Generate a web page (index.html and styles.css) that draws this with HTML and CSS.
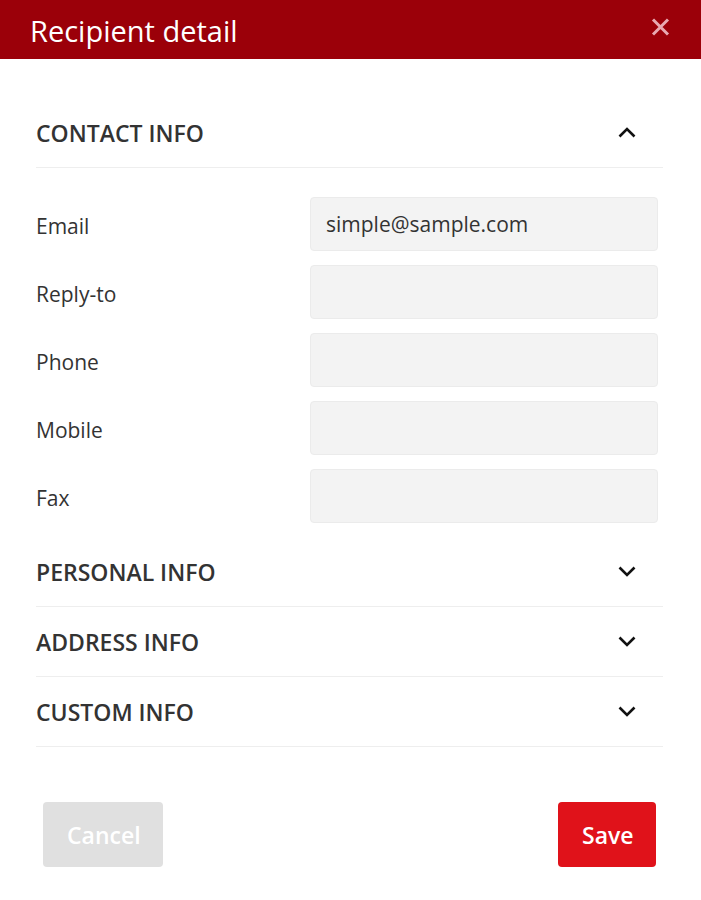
FILE: index.html
```html
<!DOCTYPE html>
<html>
<head>
<meta charset="utf-8">
<title>Recipient detail</title>
<link rel="stylesheet" href="styles.css">
</head>
<body>
<div class="dialog">
  <div class="header">
    <div class="title">Recipient detail</div>
    <svg class="close" width="19" height="18" viewBox="0 0 19 18"><path d="M2 1.5 L17 16.5 M17 1.5 L2 16.5" stroke="#e8a9b2" stroke-width="3" fill="none"/></svg>
  </div>
  <div class="content">
    <div class="section">
      <div class="section-head">
        <span class="section-title">CONTACT INFO</span>
        <svg class="chev" width="18" height="11" viewBox="0 0 18 11"><path d="M1.5 9.5 L9 2 L16.5 9.5" stroke="#111" stroke-width="2.6" fill="none"/></svg>
      </div>
      <div class="fields">
        <div class="field"><label class="label">Email</label><div class="input">simple@sample.com</div></div>
        <div class="field"><label class="label">Reply-to</label><div class="input"></div></div>
        <div class="field"><label class="label">Phone</label><div class="input"></div></div>
        <div class="field"><label class="label">Mobile</label><div class="input"></div></div>
        <div class="field"><label class="label">Fax</label><div class="input"></div></div>
      </div>
    </div>
    <div class="section">
      <div class="section-head">
        <span class="section-title">PERSONAL INFO</span>
        <svg class="chev" width="18" height="11" viewBox="0 0 18 11"><path d="M1.5 1.5 L9 9 L16.5 1.5" stroke="#111" stroke-width="2.6" fill="none"/></svg>
      </div>
    </div>
    <div class="section">
      <div class="section-head">
        <span class="section-title">ADDRESS INFO</span>
        <svg class="chev" width="18" height="11" viewBox="0 0 18 11"><path d="M1.5 1.5 L9 9 L16.5 1.5" stroke="#111" stroke-width="2.6" fill="none"/></svg>
      </div>
    </div>
    <div class="section">
      <div class="section-head">
        <span class="section-title">CUSTOM INFO</span>
        <svg class="chev" width="18" height="11" viewBox="0 0 18 11"><path d="M1.5 1.5 L9 9 L16.5 1.5" stroke="#111" stroke-width="2.6" fill="none"/></svg>
      </div>
    </div>
    <div class="footer">
      <button class="btn btn-cancel">Cancel</button>
      <button class="btn btn-save">Save</button>
    </div>
  </div>
</div>
</body>
</html>
```

FILE: styles.css
```css
html, body {
  margin: 0;
  padding: 0;
  background: #ffffff;
}
body {
  font-family: "Open Sans", "Noto Sans", sans-serif;
  color: #333333;
}
.header {
  height: 57px;
  padding: 2px 31px 0 30px;
  background: #9b0009;
  display: flex;
  align-items: center;
  justify-content: space-between;
}
.title {
  font-size: 29px;
  line-height: 57px;
  color: #ffffff;
  font-weight: 400;
}
.close {
  display: block;
  margin-top: -7px;
}
.content {
  padding: 39px 38px 0 36px;
}
.section-head {
  height: 69px;
  border-bottom: 1px solid #eeeeee;
  display: flex;
  align-items: center;
  justify-content: space-between;
  padding-right: 27px;
}
.section-title {
  font-size: 23px;
  font-weight: 600;
  color: #333333;
  line-height: 30px;
}
.chev {
  display: block;
}
.fields {
  padding-top: 29px;
}
.field {
  display: flex;
  align-items: center;
  margin-bottom: 14px;
  margin-right: 5px;
}
.label {
  width: 274px;
  flex: none;
  font-size: 21px;
  line-height: 28px;
  padding-top: 3px;
  color: #333333;
}
.input {
  flex: 1;
  height: 52px;
  box-sizing: content-box;
  border: 1px solid #ebebeb;
  border-radius: 4px;
  background: #f3f3f3;
  padding: 0 15px;
  font-size: 21px;
  line-height: 52px;
  color: #333333;
}
.footer {
  display: flex;
  justify-content: space-between;
  padding: 55px 7px 0 7px;
}
.btn {
  height: 65px;
  padding: 0 24px;
  border: none;
  border-radius: 4px;
  font-family: "Open Sans", "Noto Sans", sans-serif;
  font-size: 23px;
  font-weight: 600;
  color: #ffffff;
}
.btn-cancel {
  background: #e0e0e0;
  width: 120px;
}
.btn-save {
  background: #e0121a;
  width: 98px;
}
```
